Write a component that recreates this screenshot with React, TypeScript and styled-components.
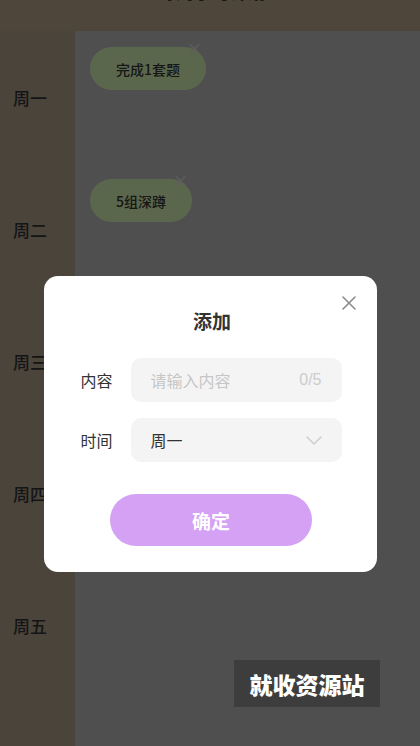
import React from "react";
import styled, { createGlobalStyle } from "styled-components";

const Global = createGlobalStyle`
  html, body { margin: 0; padding: 0; }
  body {
    font-family: "Noto Sans CJK SC", "Noto Sans", "Liberation Sans", sans-serif;
    width: 420px;
    height: 746px;
    overflow: hidden;
  }
  * { box-sizing: border-box; }
`;

const Page = styled.div`
  position: relative;
  width: 420px;
  height: 746px;
  display: flex;
  flex-direction: column;
  overflow: hidden;
  background: #b0b0b0;
`;

const Header = styled.header`
  height: 31px;
  flex: none;
  background: #ad9c83;
  display: flex;
  justify-content: center;
  overflow: hidden;
`;

const HeaderTitle = styled.div`
  margin-top: -20px;
  margin-left: 4px;
  font-size: 18px;
  font-weight: 700;
  color: #333;
  line-height: 22px;
`;

const Body = styled.div`
  flex: 1;
  display: flex;
`;

const Sidebar = styled.nav`
  width: 75px;
  flex: none;
  background: #a49783;
  display: flex;
  flex-direction: column;
`;

const DayLabel = styled.div`
  height: 132px;
  display: flex;
  align-items: center;
  padding-left: 13px;
  font-size: 17px;
  font-weight: 500;
  color: #303030;
`;

const Main = styled.main`
  flex: 1;
  display: flex;
  flex-direction: column;
  background: #b0b0b0;
`;

const TaskRow = styled.div`
  height: 132px;
  padding: 16px 0 0 15px;
  display: flex;
  align-items: flex-start;
`;

const Pill = styled.div`
  position: relative;
  height: 43px;
  padding: 0 26px;
  border-radius: 22px;
  background: #c8e5a9;
  display: flex;
  align-items: center;
  font-size: 14px;
  font-weight: 500;
  color: #333;
`;

const PillClose = styled.span`
  position: absolute;
  top: -6px;
  right: 4px;
  font-size: 15px;
  line-height: 14px;
  color: #d0d0d0;
`;

const Mask = styled.div`
  position: absolute;
  inset: 0;
  background: rgba(0, 0, 0, 0.55);
  display: flex;
  justify-content: center;
  align-items: flex-start;
  padding-top: 276px;
`;

const Modal = styled.div`
  position: relative;
  width: 333px;
  height: 296px;
  background: #fff;
  border-radius: 14px;
  padding: 33px 35px 0 37px;
  display: flex;
  flex-direction: column;
`;

const Title = styled.div`
  text-align: center;
  font-size: 19px;
  font-weight: 600;
  color: #333;
  line-height: 24px;
  margin-left: 2px;
`;

const CloseBtn = styled.button`
  position: absolute;
  top: 19px;
  right: 20px;
  width: 16px;
  height: 16px;
  padding: 0;
  border: none;
  background: none;
  display: flex;
  align-items: center;
  justify-content: center;
`;

const Form = styled.div`
  margin-top: 25px;
  display: flex;
  flex-direction: column;
  gap: 16px;
`;

const Field = styled.div`
  display: flex;
  align-items: center;
  gap: 16px;
`;

const Label = styled.span`
  width: 34px;
  flex: none;
  font-size: 16px;
  color: #333;
`;

const Box = styled.div`
  flex: 1;
  height: 44px;
  border-radius: 10px;
  background: #f4f4f4;
  display: flex;
  align-items: center;
  justify-content: space-between;
  padding: 0 20px;
  font-size: 16px;
`;

const Placeholder = styled.span`
  color: #c6c6c6;
`;

const Counter = styled.span`
  color: #cccccc;
  font-family: "Liberation Sans", sans-serif;
  font-size: 16px;
`;

const Value = styled.span`
  color: #333;
`;

const Confirm = styled.button`
  margin: 32px auto 0;
  width: 202px;
  height: 52px;
  border-radius: 26px;
  border: none;
  background: #d4a1f5;
  color: #fff;
  font-family: inherit;
  font-size: 19px;
  font-weight: 700;
`;

const Watermark = styled.div`
  position: absolute;
  left: 234px;
  top: 660px;
  width: 146px;
  height: 47px;
  background: rgba(0, 0, 0, 0.22);
  color: #fff;
  font-size: 23px;
  font-weight: 900;
  display: flex;
  align-items: center;
  justify-content: center;
`;

const days = ["周一", "周二", "周三", "周四", "周五"];
const tasks: Record<string, string[]> = {
  周一: ["完成1套题"],
  周二: ["5组深蹲"],
};

export default function App() {
  return (
    <>
      <Global />
      <Page>
        <Header>
          <HeaderTitle>每周学习计划</HeaderTitle>
        </Header>
        <Body>
          <Sidebar>
            {days.map((d) => (
              <DayLabel key={d}>{d}</DayLabel>
            ))}
          </Sidebar>
          <Main>
            {days.map((d) => (
              <TaskRow key={d}>
                {(tasks[d] || []).map((t) => (
                  <Pill key={t}>
                    {t}
                    <PillClose>×</PillClose>
                  </Pill>
                ))}
              </TaskRow>
            ))}
          </Main>
        </Body>
        <Mask>
          <Modal>
            <CloseBtn aria-label="close">
              <svg width="14" height="14" viewBox="0 0 14 14">
                <path d="M1 1L13 13M13 1L1 13" stroke="#8a8a8a" strokeWidth="1.6" strokeLinecap="round" />
              </svg>
            </CloseBtn>
            <Title>添加</Title>
            <Form>
              <Field>
                <Label>内容</Label>
                <Box>
                  <Placeholder>请输入内容</Placeholder>
                  <Counter>0/5</Counter>
                </Box>
              </Field>
              <Field>
                <Label>时间</Label>
                <Box>
                  <Value>周一</Value>
                  <svg width="16" height="9" viewBox="0 0 16 9">
                    <path d="M1 1L8 8L15 1" fill="none" stroke="#cfcfcf" strokeWidth="1.5" strokeLinecap="round" strokeLinejoin="round" />
                  </svg>
                </Box>
              </Field>
            </Form>
            <Confirm>确定</Confirm>
          </Modal>
        </Mask>
        <Watermark>就收资源站</Watermark>
      </Page>
    </>
  );
}
